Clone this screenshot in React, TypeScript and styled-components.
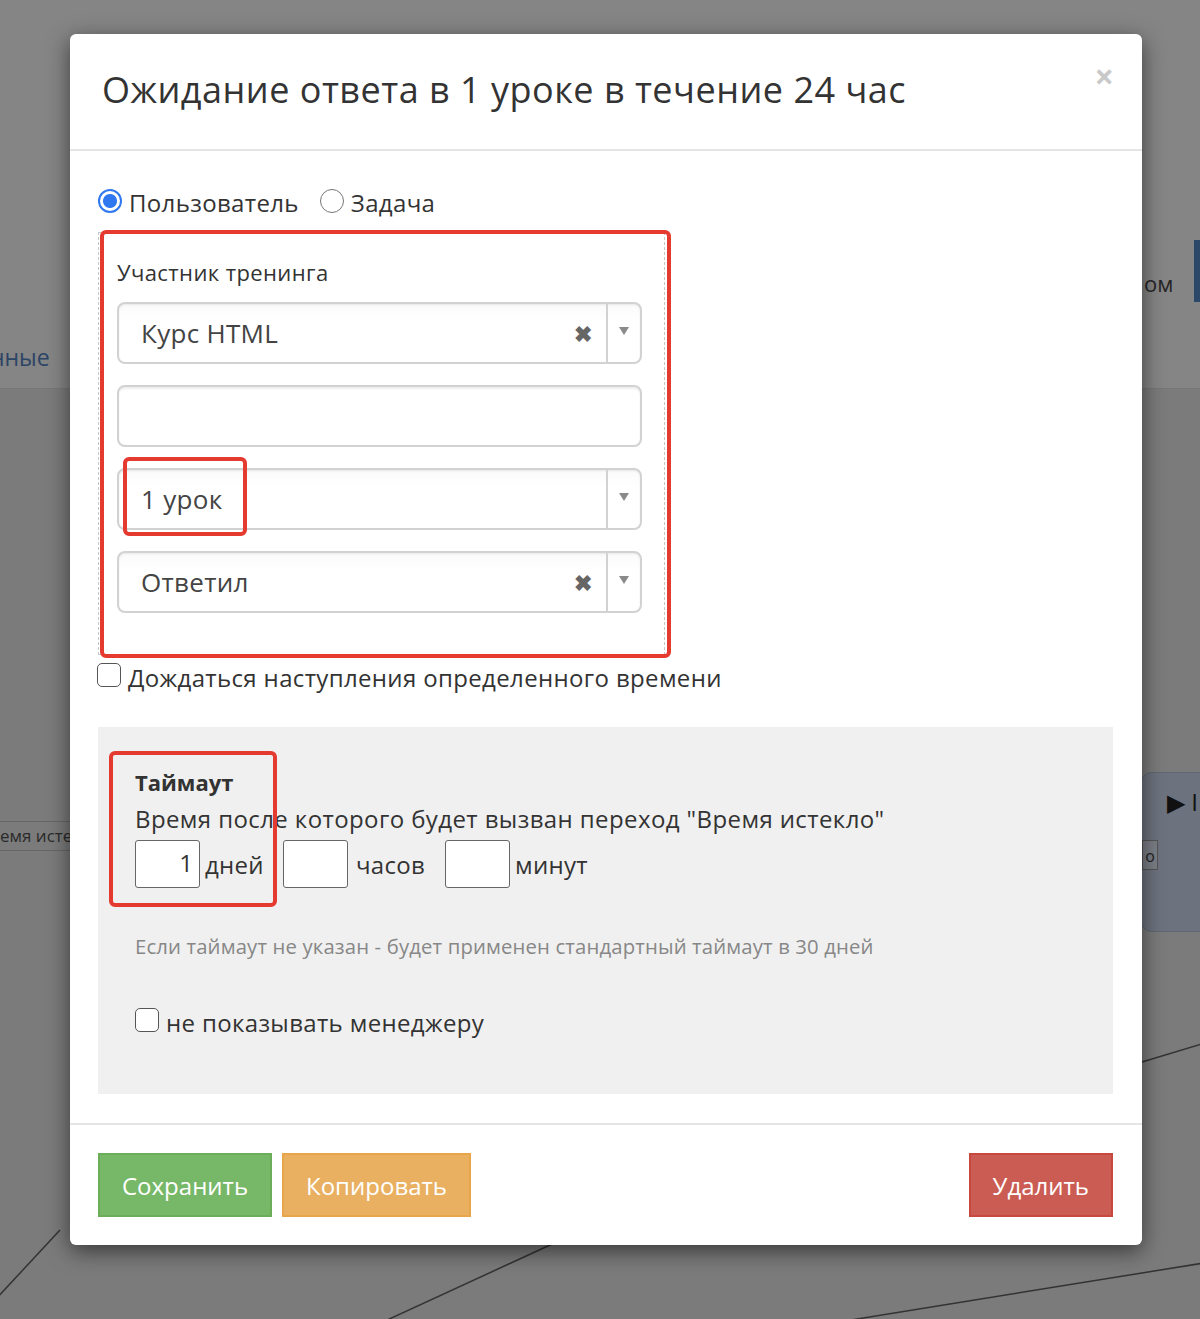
import React, { useState } from "react"
import styled, { createGlobalStyle } from "styled-components"

const GlobalStyle = createGlobalStyle`
  html, body {
    margin: 0;
    padding: 0;
    background: #7c7c7c;
  }
  body {
    font-family: "Open Sans", "Noto Sans", sans-serif;
    color: #333;
  }
`

const Page = styled.div`
  position: relative;
  width: 1200px;
  height: 1319px;
  overflow: hidden;
  background: linear-gradient(#858585 0, #858585 388px, #7b7b7b 389px, #7b7b7b 100%);
  padding: 34px 0 0 70px;
  box-sizing: border-box;
`

/* --- content of the page behind the dialog (diagram canvas, dimmed) --- */

const Behind = styled.div<{ x: number; y: number }>`
  position: absolute;
  left: ${(p) => p.x}px;
  top: ${(p) => p.y}px;
`

const TopBandLine = styled.div`
  position: absolute;
  left: 0;
  right: 0;
  top: 388px;
  height: 1px;
  background: #777;
`

const TabLabel = styled.span`
  font-size: 23px;
  color: #2c4466;
`

const DarkLabel = styled.span`
  font-size: 22px;
  color: #252525;
`

const BlueBar = styled.div`
  width: 8px;
  height: 62px;
  background: #2b4869;
`

const NodeTag = styled.div`
  width: 70px;
  height: 28px;
  border-top: 1px solid #666;
  border-bottom: 1px solid #666;
  font-size: 17px;
  line-height: 28px;
  color: #2a2a2a;
  white-space: nowrap;
  text-align: right;
  overflow: hidden;
`

const NodeCard = styled.div`
  width: 80px;
  height: 160px;
  background: #6d737e;
  border: 1px solid #5f6670;
  border-radius: 12px;
  box-sizing: border-box;
  padding: 12px 0 0 26px;
  font-size: 24px;
  color: #111;
`

const NodeChip = styled.div`
  width: 16px;
  height: 30px;
  border: 1px solid #555;
  background: #7b7f86;
  font-size: 16px;
  line-height: 30px;
  color: #222;
  text-align: center;
  box-sizing: border-box;
`

const Wires = styled.svg`
  position: absolute;
  left: 0;
  top: 0;
`

/* --- dialog --- */

const Modal = styled.div`
  position: relative;
  width: 1072px;
  background: #fff;
  border-radius: 6px;
  box-shadow: 0 6px 22px rgba(0, 0, 0, 0.55);
`

const Header = styled.div`
  display: flex;
  align-items: flex-start;
  height: 117px;
  box-sizing: border-box;
  padding: 34px 28px 0 32px;
  border-bottom: 2px solid #e5e5e5;
`

const Title = styled.h4`
  margin: 0;
  width: 803px;
  overflow: hidden;
  white-space: nowrap;
  font-size: 36px;
  font-weight: 400;
  line-height: 44px;
  color: #333;
  letter-spacing: 0.5px;
`

const Close = styled.span`
  margin-left: auto;
  margin-top: -9px;
  font-size: 34px;
  font-weight: 700;
  color: #c9c9c9;
  line-height: 1;
`

const Body = styled.div`
  padding: 35px 29px 29px 28px;
`

const Choice = styled.label`
  display: inline-flex;
  align-items: center;
  gap: 7px;
  margin-right: 21px;
  font-size: 24px;
  color: #333;
  letter-spacing: 0.35px;
`

const RadioMark = styled.span<{ checked: boolean }>`
  width: 24px;
  height: 24px;
  box-sizing: border-box;
  border-radius: 50%;
  border: ${(p) => (p.checked ? "2px solid #2f78f0" : "1.5px solid #777")};
  background: ${(p) => (p.checked ? "radial-gradient(circle, #2f78f0 0 6.5px, #fff 7.5px)" : "#fff")};
  margin-top: -4px;
`

const BoxMark = styled.span`
  width: 24px;
  height: 24px;
  box-sizing: border-box;
  border: 1.5px solid #555;
  border-radius: 5px;
  background: #fff;
  margin-top: -6px;
`

const CheckRow = styled(Choice)`
  gap: 7px;
`

const Relative = styled.div`
  position: relative;
`

const Marker = styled.div<{ x: number; y: number; w: number; h: number }>`
  position: absolute;
  left: ${(p) => p.x}px;
  top: ${(p) => p.y}px;
  width: ${(p) => p.w}px;
  height: ${(p) => p.h}px;
  border: 4px solid #e53a30;
  border-radius: 6px;
  box-sizing: border-box;
  pointer-events: none;
`

const Condition = styled.div`
  margin-top: 13px;
  width: 567px;
  box-sizing: border-box;
  border: 1px dashed #c6c6c6;
  padding: 24px 22px 41px 18px;
`

const FieldLabel = styled.div`
  font-size: 22px;
  color: #333;
  margin-bottom: 15px;
  letter-spacing: 0.4px;
`

const Fields = styled.div`
  display: flex;
  flex-direction: column;
  gap: 21px;
`

const Select = styled.div`
  display: flex;
  align-items: stretch;
  height: 62px;
  box-sizing: border-box;
  border: 2px solid #d2d2d2;
  border-radius: 8px;
  background: linear-gradient(#fafafa, #fff 30%);
  box-shadow: inset 0 1px 2px rgba(0, 0, 0, 0.08);
`

const SelectValue = styled.div`
  flex: 1;
  display: flex;
  align-items: center;
  padding-left: 22px;
  font-size: 26px;
  color: #444;
  letter-spacing: 0.3px;
`

const Clear = styled.span`
  align-self: center;
  margin-right: 14px;
  font-size: 22px;
  font-weight: 700;
  color: #666;
`

const Arrow = styled.div`
  width: 32px;
  border-left: 2px solid #d2d2d2;
  display: flex;
  align-items: center;
  justify-content: center;
  padding-bottom: 4px;
`

const TextBox = styled.div`
  height: 62px;
  box-sizing: border-box;
  border: 2px solid #d2d2d2;
  border-radius: 8px;
  background: #fff;
  box-shadow: inset 0 2px 2px rgba(0, 0, 0, 0.07);
`

const WaitRow = styled.div`
  margin-top: 6px;
  margin-left: -1px;
`

const TimeoutPanel = styled.div`
  margin-top: 33px;
  background: #f0f0f0;
  padding: 40px 37px 55px 37px;
`

const PanelTitle = styled.div`
  font-size: 22px;
  font-weight: 700;
  color: #333;
`

const PanelText = styled.div`
  margin-top: 5px;
  font-size: 24px;
  color: #333;
  letter-spacing: 0.4px;
`

const TimeRow = styled.div`
  display: flex;
  align-items: center;
  margin-top: 5px;
`

const NumberBox = styled.div<{ gapAfter: number }>`
  width: 65px;
  height: 48px;
  box-sizing: border-box;
  border: 1.5px solid #666;
  border-radius: 3px;
  background: #fff;
  font-size: 24px;
  line-height: 44px;
  text-align: right;
  padding-right: 6px;
  color: #333;
  margin-right: ${(p) => p.gapAfter}px;
`

const Unit = styled.span<{ gapAfter: number }>`
  font-size: 24px;
  color: #333;
  margin-right: ${(p) => p.gapAfter}px;
  letter-spacing: 0.3px;
`

const Hint = styled.div`
  margin-top: 44px;
  font-size: 20.3px;
  color: #878787;
  letter-spacing: 0.15px;
`

const HideRow = styled.div`
  margin-top: 46px;
`

const Footer = styled.div`
  display: flex;
  align-items: center;
  gap: 10px;
  border-top: 2px solid #e5e5e5;
  padding: 28px 29px 28px 28px;
`

const Button = styled.button<{ tone: "save" | "copy" | "remove" }>`
  height: 64px;
  padding: 0 22px;
  font-family: inherit;
  font-size: 24px;
  color: #fff;
  border-radius: 0;
  cursor: pointer;
  background: ${(p) => (p.tone === "save" ? "#77b768" : p.tone === "copy" ? "#e9b061" : "#cb5c54")};
  border: 2px solid ${(p) => (p.tone === "save" ? "#6aae5a" : p.tone === "copy" ? "#e8a54a" : "#c8473e")};
  margin-left: ${(p) => (p.tone === "remove" ? "auto" : "0")};
`

const Caret = () => (
  <svg width="12" height="10" viewBox="0 0 12 10">
    <path d="M1 1h10L6 9z" fill="#8a8a8a" />
  </svg>
)

const Dropdown: React.FC<{ value: string; clearable?: boolean }> = ({ value, clearable }) => (
  <Select>
    <SelectValue>{value}</SelectValue>
    {clearable && <Clear>✖</Clear>}
    <Arrow>
      <Caret />
    </Arrow>
  </Select>
)

export default function App() {
  const [target, setTarget] = useState<"user" | "task">("user")

  return (
    <>
      <GlobalStyle />
      <Page>
        <Wires width="1200" height="1319">
          <line x1="60" y1="1230" x2="-5" y2="1300" stroke="#333" strokeWidth="1.5" />
          <line x1="600" y1="1222" x2="385" y2="1321" stroke="#333" strokeWidth="1.5" />
          <line x1="1210" y1="1262" x2="820" y2="1325" stroke="#333" strokeWidth="1.5" />
          <line x1="1142" y1="1062" x2="1205" y2="1043" stroke="#333" strokeWidth="1.5" />
        </Wires>
        <TopBandLine />
        <Behind x={-10} y={341}>
          <TabLabel>нные</TabLabel>
        </Behind>
        <Behind x={1144} y={268}>
          <DarkLabel>ом</DarkLabel>
        </Behind>
        <Behind x={1194} y={240}>
          <BlueBar />
        </Behind>
        <Behind x={0} y={821}>
          <NodeTag>емя истек</NodeTag>
        </Behind>
        <Behind x={1140} y={772}>
          <NodeCard>▶ I</NodeCard>
        </Behind>
        <Behind x={1142} y={840}>
          <NodeChip>о</NodeChip>
        </Behind>

        <Modal>
          <Header>
            <Title>Ожидание ответа в 1 уроке в течение 24 часов</Title>
            <Close>×</Close>
          </Header>
          <Body>
            <div>
              <Choice onClick={() => setTarget("user")}>
                <RadioMark checked={target === "user"} />
                Пользователь
              </Choice>
              <Choice onClick={() => setTarget("task")}>
                <RadioMark checked={target === "task"} />
                Задача
              </Choice>
            </div>

            <Relative>
              <Condition>
                <FieldLabel>Участник тренинга</FieldLabel>
                <Fields>
                  <Dropdown value="Курс HTML" clearable />
                  <TextBox />
                  <Dropdown value="1 урок" />
                  <Dropdown value="Ответил" clearable />
                </Fields>
              </Condition>
              <Marker x={2} y={-2} w={571} h={428} />
              <Marker x={25} y={225} w={124} h={79} />
            </Relative>

            <WaitRow>
              <CheckRow>
                <BoxMark />
                Дождаться наступления определенного времени
              </CheckRow>
            </WaitRow>

            <TimeoutPanel>
              <Relative>
                <PanelTitle>Таймаут</PanelTitle>
                <PanelText>Время после которого будет вызван переход "Время истекло"</PanelText>
                <TimeRow>
                  <NumberBox gapAfter={5}>1</NumberBox>
                  <Unit gapAfter={19}>дней</Unit>
                  <NumberBox gapAfter={8}></NumberBox>
                  <Unit gapAfter={20}>часов</Unit>
                  <NumberBox gapAfter={5}></NumberBox>
                  <Unit gapAfter={0}>минут</Unit>
                </TimeRow>
                <Marker x={-26} y={-16} w={168} h={156} />
              </Relative>
              <Hint>Если таймаут не указан - будет применен стандартный таймаут в 30 дней</Hint>
              <HideRow>
                <CheckRow>
                  <BoxMark />
                  не показывать менеджеру
                </CheckRow>
              </HideRow>
            </TimeoutPanel>
          </Body>
          <Footer>
            <Button tone="save">Сохранить</Button>
            <Button tone="copy">Копировать</Button>
            <Button tone="remove">Удалить</Button>
          </Footer>
        </Modal>
      </Page>
    </>
  )
}
